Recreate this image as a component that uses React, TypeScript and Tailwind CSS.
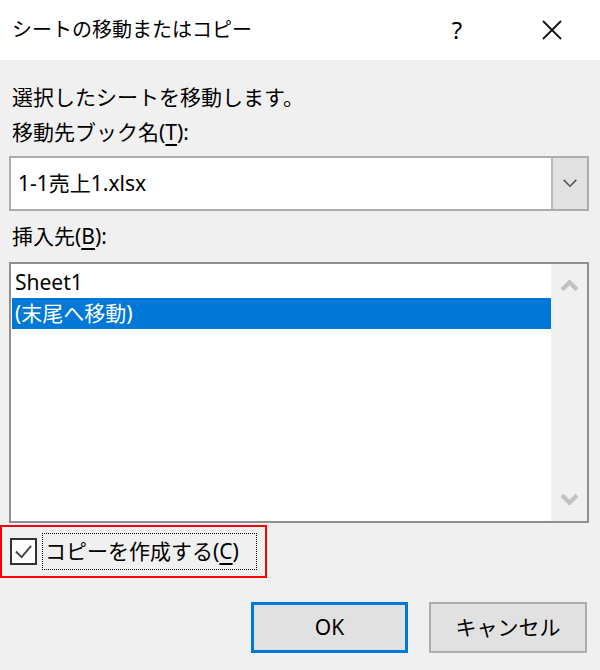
import React from 'react';

const font = { fontFamily: '"Noto Sans", "Noto Sans CJK JP", sans-serif' };

const Chevron = ({ up, className, w = 3 }: { up?: boolean; className: string; w?: number }) => (
  <svg viewBox="0 0 16 10" className={className} fill="none">
    <path d={up ? 'M1 9 L8 2 L15 9' : 'M1 1 L8 8 L15 1'} stroke="currentColor" strokeWidth={w} />
  </svg>
);

export default function App() {
  return (
    <div className="w-[600px] h-[670px] bg-[#f0f0f0] text-black overflow-hidden" style={font}>
      {/* タイトルバー */}
      <div className="h-[60px] bg-white flex items-center pl-[12px] pr-[28px]">
        <span className="text-[20px] leading-none">シートの移動またはコピー</span>
        <div className="ml-auto flex items-center gap-[55px]">
          <span className="w-[40px] text-center text-[24px] leading-none">?</span>
          <span className="w-[40px] flex justify-center">
            <svg viewBox="0 0 20 20" className="w-[20px] h-[20px]">
              <path d="M1 1 L19 19 M19 1 L1 19" stroke="#111" strokeWidth="1.8" />
            </svg>
          </span>
        </div>
      </div>

      <div className="pl-[9px] pr-[11px] pt-[20px] text-[21px]">
        <div className="h-[35px] flex items-center pl-[3px]">選択したシートを移動します。</div>
        <div className="h-[35px] flex items-center pl-[3px]">
          移動先ブック名(<span className="underline underline-offset-4">T</span>):
        </div>

        {/* コンボボックス */}
        <div className="mt-[6px] h-[55px] flex border-2 border-[#acacac] bg-white">
          <div className="flex-1 flex items-center pl-[7px]">1-1売上1.xlsx</div>
          <div className="w-[36px] bg-[#e1e1e1] border-l-2 border-[#b9b9b9] flex items-center justify-center">
            <Chevron className="w-[16px] h-[9px] text-[#555]" w={1.8} />
          </div>
        </div>

        <div className="mt-[8px] h-[35px] flex items-center pl-[3px]">
          挿入先(<span className="underline underline-offset-4">B</span>):
        </div>

        {/* リストボックス */}
        <div className="mt-[8px] h-[261px] flex border-2 border-[#8e8f94] bg-white">
          <div className="flex-1 pt-[3px] pl-[1px]">
            <div className="h-[31px] flex items-center pl-[3px]">Sheet1</div>
            <div className="h-[31px] flex items-center pl-[3px] bg-[#0078d7] text-white">(末尾へ移動)</div>
          </div>
          <div className="w-[36px] bg-[#f0f0f0] flex flex-col items-center justify-between py-[16px]">
            <Chevron up className="w-[17px] h-[11px] text-[#c2c2c2]" w={4} />
            <Chevron className="w-[17px] h-[11px] text-[#c2c2c2]" w={4} />
          </div>
        </div>

        {/* コピーを作成する */}
        <div className="-ml-[9px] mt-[2px] w-[267px] h-[53px] border-2 border-[#ff0000] flex items-center pl-[8px]">
          <div className="w-[27px] h-[27px] border-2 border-[#333] bg-white flex items-center justify-center">
            <svg viewBox="0 0 20 20" className="w-[19px] h-[19px]">
              <path d="M2 10 L8 16 L18 4" stroke="#444" strokeWidth="2" fill="none" />
            </svg>
          </div>
          <div className="ml-[5px] h-[37px] w-[215px] border border-dotted border-black flex items-center pl-[2px]">
            コピーを作成する(<span className="underline underline-offset-4">C</span>)
          </div>
        </div>

        {/* ボタン */}
        <div className="mt-[24px] flex justify-end gap-[21px] pr-[2px]">
          <button className="w-[157px] h-[51px] bg-[#e1e1e1] border-[3px] border-[#0078d7] text-[21px]" style={font}>
            OK
          </button>
          <button className="w-[158px] h-[51px] bg-[#e1e1e1] border-2 border-[#adadad] text-[21px]" style={font}>
            キャンセル
          </button>
        </div>
      </div>
    </div>
  );
}
